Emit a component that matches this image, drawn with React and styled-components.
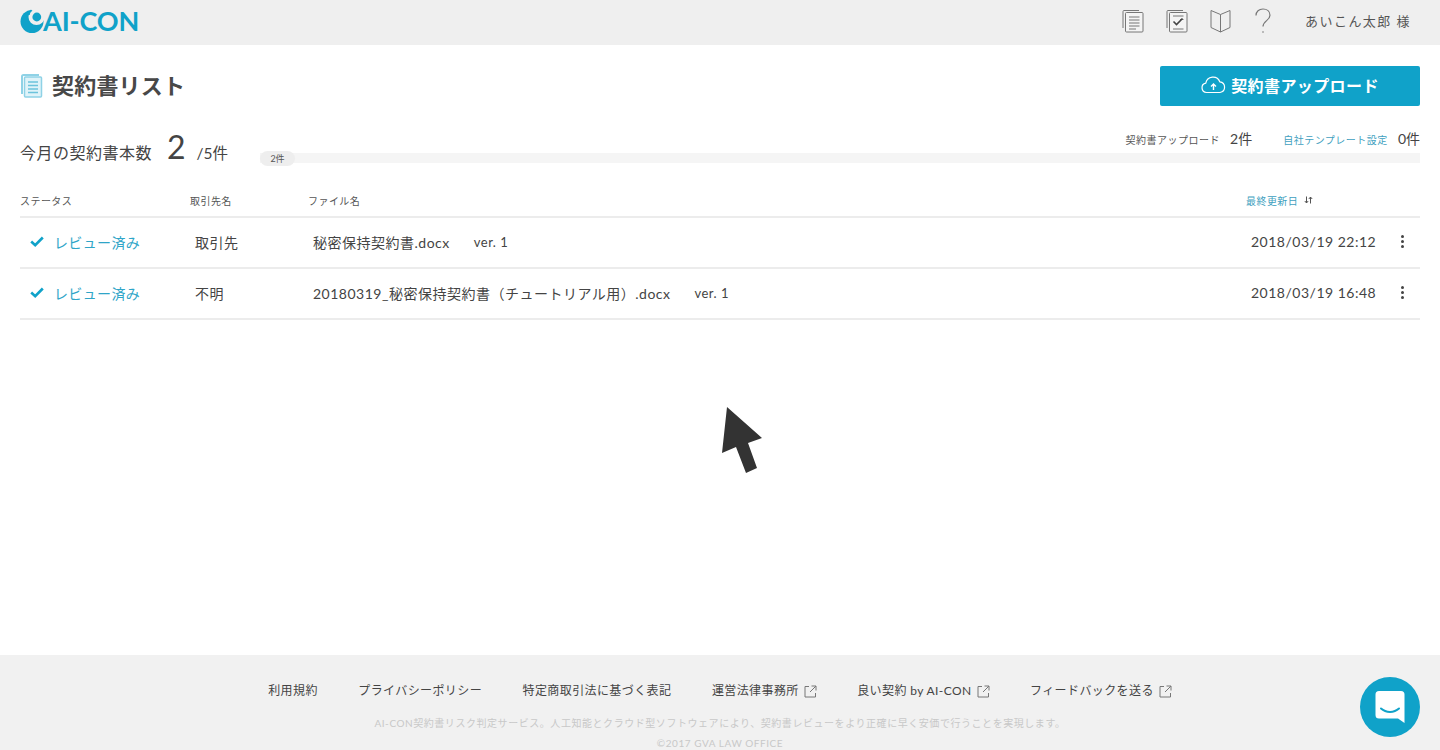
import React from "react";
import styled, { createGlobalStyle } from "styled-components";

const BLUE = "#10a2c9";

const GlobalStyle = createGlobalStyle`
  html, body { margin: 0; padding: 0; height: 100%; overflow: hidden; background: #fff; }
  body {
    font-family: Lato, "Noto Sans CJK JP", sans-serif;
    color: #444;
  }
`;

const Page = styled.div`
  position: relative;
  height: 750px;
  display: flex;
  flex-direction: column;
  overflow: hidden;
`;

const Header = styled.header`
  height: 45px;
  flex-shrink: 0;
  box-sizing: border-box;
  background: #efefef;
  display: flex;
  align-items: center;
  justify-content: space-between;
  padding: 0 29px 4px 20px;
`;

const Logo = styled.div`
  display: flex;
  align-items: center;
  color: ${BLUE};
  font-size: 27px;
  font-weight: 700;
  letter-spacing: -0.1px;
  line-height: 1;
`;

const LogoSvg = styled.svg`
  display: block;
  margin-right: -1px;
`;

const HeaderNav = styled.nav`
  display: flex;
  align-items: center;
`;

const NavIcon = styled.svg`
  display: block;
  margin-right: ${(p) => p.$gap}px;
`;

const UserName = styled.span`
  font-size: 13px;
  letter-spacing: 1.45px;
  color: #555;
`;

const Main = styled.main`
  flex: 1;
  padding: 21px 20px 0;
`;

const TitleRow = styled.div`
  display: flex;
  justify-content: space-between;
  align-items: center;
  height: 40px;
`;

const Title = styled.h1`
  margin: 0;
  display: flex;
  align-items: center;
  gap: 9px;
  padding-left: 1px;
  font-size: 22px;
  font-weight: 700;
  letter-spacing: 0.2px;
  color: #484848;
  line-height: 1;
`;

const UploadButton = styled.button`
  width: 260px;
  height: 40px;
  border: 0;
  border-radius: 2px;
  background: ${BLUE};
  color: #fff;
  font: 700 16px Lato, "Noto Sans CJK JP", sans-serif;
  letter-spacing: 0.4px;
  display: flex;
  align-items: center;
  justify-content: center;
  gap: 5px;
  padding: 0 0 3px 0;
`;

const Summary = styled.section`
  display: flex;
  align-items: flex-end;
  height: 38px;
  margin-top: 22px;
`;

const MonthCount = styled.div`
  width: 240px;
  flex-shrink: 0;
  display: flex;
  align-items: baseline;
  color: #444;
  line-height: 1;
  position: relative;
  top: -3px;
`;

const CountLabel = styled.span`
  font-size: 16px;
  letter-spacing: 0.5px;
`;

const CountValue = styled.span`
  font-size: 32px;
  margin: 0 11px 0 15px;
`;

const CountLimit = styled.span`
  font-size: 15.5px;
`;

const UsageColumn = styled.div`
  flex: 1;
  display: flex;
  flex-direction: column;
`;

const UsageLabels = styled.div`
  display: flex;
  justify-content: flex-end;
  align-items: baseline;
  line-height: 16px;
  margin-bottom: 5px;
`;

const UsageLabel = styled.span`
  font-size: 10px;
  letter-spacing: 0.5px;
  margin: 0 10px 0 ${(p) => p.$left || 0}px;
  color: ${(p) => (p.$link ? "#3f9fc0" : "#555")};
`;

const UsageNum = styled.span`
  font-size: 14px;
  color: #444;
`;

const Bar = styled.div`
  position: relative;
  height: 10px;
  background: #f5f5f5;
  margin-bottom: 3px;
`;

const Pill = styled.span`
  position: absolute;
  left: 0;
  top: -2px;
  width: 35px;
  height: 15px;
  border-radius: 8px;
  background: #eeeeee;
  color: #555;
  font-size: 9px;
  line-height: 15px;
  text-align: center;
`;

const Table = styled.section`
  margin-top: 19px;
`;

const Columns = styled.div`
  display: grid;
  grid-template-columns: 170px 118px 938px 1fr;
  align-items: center;
`;

const HeadRow = styled(Columns)`
  height: 33px;
  border-bottom: 2px solid #ececec;
  box-sizing: border-box;
  padding-bottom: 1px;
`;

const HeadCell = styled.div`
  font-size: 10px;
  letter-spacing: 0.45px;
  color: ${(p) => (p.$active ? "#3f9fc0" : "#555")};
  display: flex;
  align-items: center;
  gap: 6px;
`;

const Row = styled(Columns)`
  height: 51px;
  box-sizing: border-box;
  padding-bottom: 2px;
  border-bottom: 2px solid #ececec;
  font-size: 14px;
  letter-spacing: 0.5px;
  color: #444;
`;

const StatusCell = styled.div`
  display: flex;
  align-items: center;
  gap: 10px;
  padding-left: 10px;
  color: #2fa5c8;
  letter-spacing: 0.35px;
`;

const TextCell = styled.div`
  padding-left: 5px;
  display: flex;
  align-items: center;
`;

const Version = styled.span`
  font-size: 13px;
  margin-left: 24px;
`;

const DateCell = styled(TextCell)`
  justify-content: space-between;
  padding-right: 16px;
`;

const Dots = styled.span`
  display: flex;
  flex-direction: column;
  gap: 2px;
  i {
    width: 3px;
    height: 3px;
    border-radius: 50%;
    background: #444;
  }
`;

const Footer = styled.footer`
  height: 95px;
  flex-shrink: 0;
  background: #f1f1f1;
  display: flex;
  flex-direction: column;
  align-items: center;
  padding-top: 28px;
  box-sizing: border-box;
`;

const FooterLinks = styled.div`
  display: flex;
  gap: 40.500px;
  font-size: 12px;
  letter-spacing: 0.4px;
  line-height: 16px;
  color: #444;
`;

const FooterLink = styled.span`
  display: flex;
  align-items: center;
  gap: 5px;
`;

const FooterNote = styled.div`
  font-size: 10px;
  letter-spacing: 0.55px;
  line-height: 14px;
  color: #c8c8c8;
  margin-top: ${(p) => p.$top}px;
`;

const ChatButton = styled.div`
  position: absolute;
  right: 20px;
  bottom: 13px;
  width: 60px;
  height: 60px;
  border-radius: 50%;
  background: ${BLUE};
  display: flex;
  align-items: center;
  justify-content: center;
`;

const Pointer = styled.svg`
  position: absolute;
  left: 720px;
  top: 405px;
`;

const LogoMark = () => (
  <LogoSvg width="24" height="24" viewBox="0 0 24 24">
    <circle cx="12" cy="12.500" r="11.500" fill={BLUE} />
    <circle cx="16.500" cy="8" r="8" fill="#efefef" />
    <circle cx="16.800" cy="8" r="4.400" fill={BLUE} />
    <path d="M11.500 1.200A6 6 0 0 0 8.800 6" fill="none" stroke={BLUE} strokeWidth="1.800" />
  </LogoSvg>
);

const DocsIcon = () => (
  <svg width="22" height="24" viewBox="0 0 22 24" fill="none">
    <path d="M18 1H2.500A1.500 1.500 0 0 0 1 2.500V20" stroke="#8fd2e6" strokeWidth="2" />
    <rect x="3.500" y="3" width="17" height="20" rx="1" fill="#dff3f9" stroke="#8fd2e6" strokeWidth="1.500" />
    <path d="M7 8h10M7 11.500h10M7 15h10M7 18.500h10" stroke="#6cc3dc" strokeWidth="1.500" />
  </svg>
);

const ListIcon = () => (
  <NavIcon $gap={22} width="22" height="24" viewBox="0 0 22 24" fill="none" stroke="#777" strokeWidth="1">
    <path d="M17 1.500H2A1 1 0 0 0 1 2.500V19" />
    <rect x="3.500" y="3.500" width="17.500" height="19.500" rx="1" fill="#f4f4f4" />
    <path d="M7 8h10.500M7 11h10.500M7 14h10.500M7 17h10.500M7 20h7" />
  </NavIcon>
);

const CheckListIcon = () => (
  <NavIcon $gap={22} width="22" height="24" viewBox="0 0 22 24" fill="none" stroke="#777" strokeWidth="1">
    <path d="M17 1.500H2A1 1 0 0 0 1 2.500V19" />
    <rect x="3.500" y="3.500" width="17.500" height="19.500" rx="1" fill="#f4f4f4" />
    <path d="M7 7h10.500M14 10.500h3.500M7 20h10.500" />
    <path d="M7.500 12.500l3 3 6-6" stroke="#444" strokeWidth="1.600" />
  </NavIcon>
);

const BookIcon = () => (
  <NavIcon $gap={24} width="21" height="24" viewBox="0 0 21 24" fill="none" stroke="#777" strokeWidth="1">
    <path d="M10.500 5.500L1 1.500V18.500L10.500 23L20 18.500V1.500ZM10.500 5.500V23" strokeLinejoin="round" />
  </NavIcon>
);

const HelpIcon = () => (
  <NavIcon $gap={34} width="16" height="26" viewBox="0 0 16 26" fill="none" stroke="#777" strokeWidth="1.200">
    <path d="M1 7.500C1 3.500 4 1 8 1s7 2.500 7 6.300c0 5.200-7 5.500-7 11.200" />
    <circle cx="8" cy="24" r="0.800" fill="#777" stroke="none" />
  </NavIcon>
);

const CloudIcon = () => (
  <svg width="25" height="19" viewBox="0 0 25 19" fill="none" stroke="#fff" strokeWidth="1.200">
    <path d="M6 17.500H5.500A4.700 4.700 0 0 1 4.800 8.200 7.300 7.300 0 0 1 18.800 6.800 5.400 5.400 0 0 1 19 17.500Z" strokeLinejoin="round" />
    <path d="M12.500 15V9.500M10 11.500l2.500-2.500 2.500 2.500" strokeWidth="1.400" />
  </svg>
);

const Check = () => (
  <svg width="14" height="11" viewBox="0 0 14 11" fill="none">
    <path d="M1.200 5.500L5.200 9.200L12.800 1.500" stroke={BLUE} strokeWidth="2.600" />
  </svg>
);

const SortIcon = () => (
  <svg width="9" height="8" viewBox="0 0 9 8" fill="none" stroke="#555" strokeWidth="1">
    <path d="M2.500 0.500V7M0.800 5L2.500 7L4.200 5M6.500 7.500V1M4.800 3L6.500 1L8.200 3" />
  </svg>
);

const ExternalIcon = () => (
  <svg width="13" height="13" viewBox="0 0 13 13" fill="none" stroke="#777" strokeWidth="1">
    <path d="M5 1.500H1V12H11.500V8M7.500 1H12V5.500M12 1L6 7" />
  </svg>
);

const rows = [
  { client: "取引先", file: "秘密保持契約書.docx", date: "2018/03/19 22:12" },
  { client: "不明", file: "20180319_秘密保持契約書（チュートリアル用）.docx", date: "2018/03/19 16:48" },
];

const links = [
  { label: "利用規約" },
  { label: "プライバシーポリシー" },
  { label: "特定商取引法に基づく表記" },
  { label: "運営法律事務所", external: true },
  { label: "良い契約 by AI-CON", external: true },
  { label: "フィードバックを送る", external: true },
];

const App = () => {
  return (
    <Page>
      <GlobalStyle />
      <Header>
        <Logo>
          <LogoMark />
          AI-CON
        </Logo>
        <HeaderNav>
          <ListIcon />
          <CheckListIcon />
          <BookIcon />
          <HelpIcon />
          <UserName>あいこん太郎 様</UserName>
        </HeaderNav>
      </Header>

      <Main>
        <TitleRow>
          <Title>
            <DocsIcon />
            契約書リスト
          </Title>
          <UploadButton>
            <CloudIcon />
            契約書アップロード
          </UploadButton>
        </TitleRow>

        <Summary>
          <MonthCount>
            <CountLabel>今月の契約書本数</CountLabel>
            <CountValue>2</CountValue>
            <CountLimit>/5件</CountLimit>
          </MonthCount>
          <UsageColumn>
            <UsageLabels>
              <UsageLabel>契約書アップロード</UsageLabel>
              <UsageNum>2件</UsageNum>
              <UsageLabel $link $left={31}>自社テンプレート設定</UsageLabel>
              <UsageNum>0件</UsageNum>
            </UsageLabels>
            <Bar>
              <Pill>2件</Pill>
            </Bar>
          </UsageColumn>
        </Summary>

        <Table>
          <HeadRow>
            <HeadCell>ステータス</HeadCell>
            <HeadCell>取引先名</HeadCell>
            <HeadCell>ファイル名</HeadCell>
            <HeadCell $active>
              最終更新日
              <SortIcon />
            </HeadCell>
          </HeadRow>
          {rows.map((row) => (
            <Row key={row.date}>
              <StatusCell>
                <Check />
                レビュー済み
              </StatusCell>
              <TextCell>{row.client}</TextCell>
              <TextCell>
                {row.file}
                <Version>ver. 1</Version>
              </TextCell>
              <DateCell>
                {row.date}
                <Dots>
                  <i />
                  <i />
                  <i />
                </Dots>
              </DateCell>
            </Row>
          ))}
        </Table>
      </Main>

      <Footer>
        <FooterLinks>
          {links.map((link) => (
            <FooterLink key={link.label}>
              {link.label}
              {link.external && <ExternalIcon />}
            </FooterLink>
          ))}
        </FooterLinks>
        <FooterNote $top={17}>AI-CON契約書リスク判定サービス。人工知能とクラウド型ソフトウェアにより、契約書レビューをより正確に早く安価で行うことを実現します。</FooterNote>
        <FooterNote $top={6}>©2017 GVA LAW OFFICE</FooterNote>
      </Footer>

      <ChatButton>
        <svg width="30" height="34" viewBox="0 0 30 34">
          <path fill="#fff" d="M4 1H26A3.500 3.500 0 0 1 29.500 4.500V33L23 28.500H4A3.500 3.500 0 0 1 0.500 25V4.500A3.500 3.500 0 0 1 4 1Z" />
          <path d="M6 18.500C11 23 19 23 24 18.500" fill="none" stroke={BLUE} strokeWidth="2" strokeLinecap="round" />
        </svg>
      </ChatButton>

      <Pointer width="46" height="72" viewBox="720 405 46 72">
        <polygon fill="#333" points="727,407 762,438 748,443 757,468 746,473 736,447 722,453" />
      </Pointer>
    </Page>
  );
};

export default App;
